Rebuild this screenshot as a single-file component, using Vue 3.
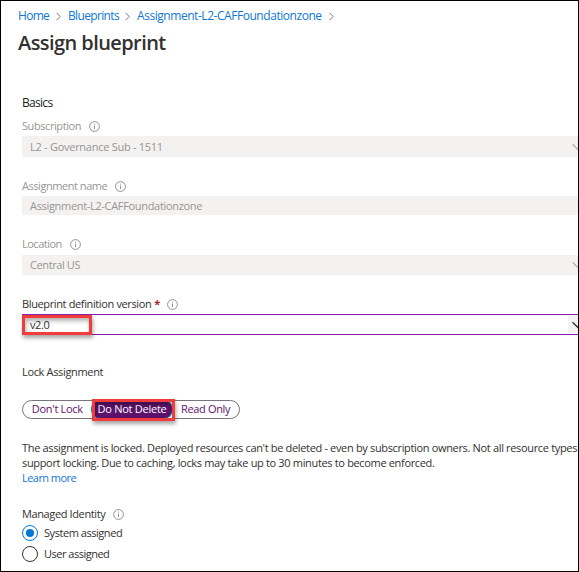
<script setup>
import { ref, h } from 'vue'

const crumbs = [
  { text: 'Home', cls: 'c-home' },
  { text: 'Blueprints', cls: 'c-blue' },
  { text: 'Assignment-L2-CAFFoundationzone', cls: 'c-assign' },
]
const lock = ref('Do Not Delete')
const identity = ref('System assigned')

const InfoIcon = () =>
  h('svg', { width: 11, height: 11, viewBox: '0 0 11 11', fill: 'none', stroke: '#77757a' }, [
    h('circle', { cx: 5.5, cy: 5.5, r: 4.9, 'stroke-width': 0.8 }),
    h('path', { d: 'M5.5 4.7v3.4M5.5 2.7v1', 'stroke-width': 0.8 }),
  ])
const Chevron = () =>
  h('svg', { width: 12, height: 8, viewBox: '0 0 12 8', fill: 'none', stroke: 'currentColor' }, [
    h('path', { d: 'M.5 1.2l5.5 5.3 5.5-5.3', 'stroke-width': 1.3 }),
  ])
</script>

<template>
  <main class="page">
    <nav class="crumbs">
      <template v-for="c in crumbs" :key="c.text">
        <a :class="c.cls">{{ c.text }}</a>
        <svg width="5" height="9" viewBox="0 0 5 9" fill="none" stroke="#77757a"><path d="M.5 .8l3.7 3.7L.5 8.2" /></svg>
      </template>
    </nav>
    <h1><span>Assign blueprint</span></h1>

    <section class="form">
      <h2><span class="t-basics">Basics</span></h2>

      <label class="label muted"><span class="t-sub">Subscription</span><InfoIcon /></label>
      <div class="field h21"><span class="v-sub">L2 - Governance Sub - 1511</span><i class="drop"><Chevron /></i></div>

      <label class="label muted name"><span class="t-name">Assignment name</span><InfoIcon /></label>
      <div class="field h19"><span class="v-name">Assignment-L2-CAFFoundationzone</span></div>

      <label class="label muted loc"><span class="t-loc">Location</span><InfoIcon /></label>
      <div class="field h20"><span class="v-loc">Central US</span><i class="drop"><Chevron /></i></div>

      <label class="label ver"><span class="t-ver">Blueprint definition version</span><b>*</b><InfoIcon /></label>
      <div class="field active"><span class="v-ver">v2.0</span><i class="drop"><Chevron /></i><em class="mark mark-version"></em></div>

      <label class="label lock"><span class="t-lock">Lock Assignment</span></label>
      <div class="toggle">
        <button class="b1" @click="lock = 'Don\'t Lock'"><span>Don't Lock</span></button>
        <button class="b2" :class="{ on: lock === 'Do Not Delete' }" @click="lock = 'Do Not Delete'"><span>Do Not Delete</span></button>
        <button class="b3" @click="lock = 'Read Only'"><span>Read Only</span></button>
        <em class="mark mark-lock"></em>
      </div>

      <p class="note">
        <span class="n1">The assignment is locked. Deployed resources can't be deleted - even by subscription owners. Not all resource types</span><br>
        <span class="n2">support locking. Due to caching, locks may take up to 30 minutes to become enforced.</span><br>
        <a class="n3">Learn more</a>
      </p>

      <label class="label identity"><span class="t-id">Managed Identity</span><InfoIcon /></label>
      <div class="radio" @click="identity = 'System assigned'">
        <i :class="{ on: identity === 'System assigned' }"></i><span class="r-sys">System assigned</span>
      </div>
      <div class="radio" @click="identity = 'User assigned'">
        <i :class="{ on: identity === 'User assigned' }"></i><span class="r-user">User assigned</span>
      </div>
    </section>
  </main>
</template>

<style>
body { margin: 0; background: #fff; }
</style>

<style scoped>
.page {
  box-sizing: border-box;
  width: 579px;
  height: 572px;
  border: 1px solid #000;
  overflow: hidden;
  background: #fff;
  color: #323130;
  font: 11px/16px "Open Sans", "Noto Sans", sans-serif;
  white-space: nowrap;
}
span, a { display: inline-block; }
svg { flex: none; }
.crumbs { display: flex; align-items: center; height: 16px; padding: 7px 0 0 17px; font-size: 12px; }
.crumbs a { color: #0f78d4; }
.crumbs svg { margin: 1px 0 0 7px; }
.crumbs svg + a { margin-left: 7px; }
.crumbs .c-home { width: 31px; letter-spacing: -.7px; }
.crumbs .c-blue { width: 50px; letter-spacing: -.65px; }
.crumbs .c-assign { width: 185px; letter-spacing: -.45px; }
h1 { margin: 5px 0 0 17px; height: 28px; font-size: 20px; line-height: 28px; font-weight: 600; letter-spacing: -.57px; color: #323130; }
.form { padding: 38px 0 0 21px; }
h2 { margin: 0; font-size: 12px; line-height: 16px; font-weight: 400; color: #201f1e; }
.label { display: flex; align-items: center; height: 16px; margin-top: 7px; }
.label svg { margin-left: 8px; }
.label b { margin-left: 3px; width: 5px; color: #a4262c; }
.muted { color: #979593; }
.field { position: relative; display: flex; align-items: center; box-sizing: border-box; padding-left: 8px; margin-top: 2px; background: #f3f2f1; color: #979593; }
.h21 { height: 21px; }
.h19 { height: 19px; }
.h20 { height: 20px; margin-top: 3px; }
.drop { flex: none; display: flex; align-items: center; justify-content: center; width: 20px; height: 17px; margin: 0 -10px 0 auto; color: #b5b3b1; }
.name { margin-top: 21px; }
.loc { margin-top: 21px; }
.ver { margin-top: 21px; }
.active { height: 21px; border: solid #881cac; border-width: 1px 0; background: #fff; color: #323130; }
.active .drop { background: #f3f2f1; color: #323130; }
.mark { box-sizing: border-box; position: absolute; border: 3px solid #f23c3c; box-shadow: 1px 3px 4px rgba(0,0,0,.35), inset 1px 3px 4px rgba(0,0,0,.3); }
.mark-version { left: 0; top: 0; width: 70px; height: 20px; }
.lock { margin-top: 29px; }
.toggle { position: relative; display: flex; box-sizing: border-box; width: 218px; height: 19px; margin-top: 20px; border: 1px solid #77757a; border-radius: 10px; }
.toggle button { display: flex; align-items: center; justify-content: center; border: 0; padding: 0 0 1px; height: 17px; line-height: 16px; font: inherit; color: #5c126b; background: none; }
.b1 { width: 69px; }
.toggle .b2 { width: 81px; border-radius: 8px; }
.toggle .b2.on { background: #5c126b; color: #fff; box-shadow: 0 0 0 1px #0f94c8; }
.b3 { width: 67px; }
.mark-lock { left: 69px; top: -2px; width: 83px; height: 22px; }
.note { margin: 21px 0 0; line-height: 15px; }
.note a { color: #0f78d4; }
.identity { margin-top: 21px; }
.radio { display: flex; align-items: center; height: 21px; gap: 6px; }
.radio i { display: flex; align-items: center; justify-content: center; box-sizing: border-box; width: 16px; height: 16px; border: 1px solid #323130; border-radius: 50%; }
.radio .on { border-color: #0078d4; }
.radio .on::after { content: ""; width: 8px; height: 8px; border-radius: 50%; background: #0078d4; }

/* tracking */
.t-basics { letter-spacing: -.7px; }
.t-sub { letter-spacing: -.42px; }
.v-sub { letter-spacing: -.27px; }
.t-name { letter-spacing: -.45px; }
.v-name { letter-spacing: -.32px; }
.t-loc { letter-spacing: -.5px; }
.v-loc { letter-spacing: -.4px; }
.t-ver { letter-spacing: -.37px; }
.v-ver { letter-spacing: -.4px; }
.t-lock { letter-spacing: -.34px; }
.b1 span { letter-spacing: -.3px; }
.b2 span { letter-spacing: -.25px; }
.b3 span { letter-spacing: -.35px; }
.n1, .n2 { letter-spacing: -.337px; }
.n3 { letter-spacing: -.55px; }
.t-id { letter-spacing: -.38px; }
.r-sys { letter-spacing: -.45px; }
.r-user { letter-spacing: -.5px; }
</style>
